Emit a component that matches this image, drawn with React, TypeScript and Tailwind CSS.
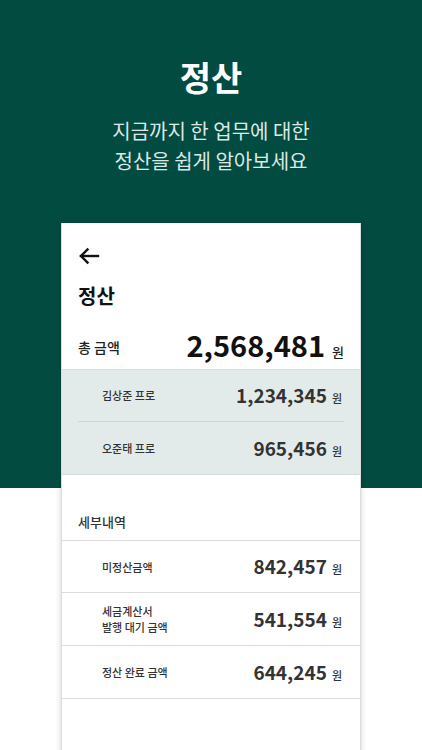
const font = { fontFamily: '"Noto Sans CJK KR", "Noto Sans", sans-serif' };

function ArrowLeft() {
  return (
    <svg width="22" height="18" viewBox="0 0 22 18" fill="none" stroke="#111" strokeWidth="2.4" strokeLinecap="square">
      <path d="M20 9H3" />
      <path d="M9.5 2.5L3 9l6.5 6.5" />
    </svg>
  );
}

function Amount({ value, big }: { value: string; big?: boolean }) {
  return (
    <div className={`flex items-baseline ${big ? "gap-[7px]" : "gap-[5px]"}`}>
      <span className={big ? "text-[29px] font-bold text-[#111]" : "text-[19px] font-bold text-[#333]"}>
        {value}
      </span>
      <span className={big ? "text-[13px] font-medium text-[#222]" : "text-[11px] font-medium text-[#333]"}>원</span>
    </div>
  );
}

const people = [
  { name: "김상준 프로", amount: "1,234,345" },
  { name: "오준태 프로", amount: "965,456" },
];

const details = [
  { label: ["미정산금액"], amount: "842,457", h: "h-[52px]" },
  { label: ["세금계산서", "발행 대기 금액"], amount: "541,554", h: "h-[53px]" },
  { label: ["정산 완료 금액"], amount: "644,245", h: "h-[53px]" },
];

export default function App() {
  return (
    <div
      style={font}
      className="h-[750px] overflow-hidden bg-[linear-gradient(to_bottom,#024b40_488px,#ffffff_488px)]"
    >
      <header className="flex flex-col items-center pt-[52px] text-center">
        <h1 className="text-[34px] font-bold leading-[50px] text-white">정산</h1>
        <p className="mt-[14px] text-[20px] leading-[30px] text-[#dce8e4]">
          지금까지 한 업무에 대한
          <br />
          정산을 쉽게 알아보세요
        </p>
      </header>

      <section className="mx-auto mt-[47px] h-[600px] w-[300px] border-x border-[#dcdcdc] bg-white shadow-[0_0_6px_rgba(0,0,0,0.18)]">
        <div className="px-[16px] pt-[24px]">
          <ArrowLeft />
          <h2 className="mt-[17px] text-[20px] font-bold leading-[28px] text-[#111]">정산</h2>
          <div className="mt-[11px] flex h-[48px] items-center justify-between">
            <span className="pt-[4px] text-[14px] font-medium text-[#222]">총 금액</span>
            <Amount value="2,568,481" big />
          </div>
        </div>

        <div className="border-y border-[#d6dedd] bg-[#e3ebea] px-[16px]">
          {people.map((p, i) => (
            <div
              key={p.name}
              className={`flex h-[52px] items-center justify-between pl-[24px] pr-[2px] ${i === 0 ? "border-b border-[#cdd6d4]" : ""}`}
            >
              <span className="text-[11px] font-medium text-[#333]">{p.name}</span>
              <Amount value={p.amount} />
            </div>
          ))}
        </div>

        <div className="px-[16px] pt-[37px] pb-[9px]">
          <h3 className="text-[13px] font-medium leading-[19px] text-[#333]">세부내역</h3>
        </div>

        <div className="border-t border-[#dcdcdc]">
          {details.map((d) => (
            <div
              key={d.amount}
              className={`flex ${d.h} items-center justify-between border-b border-[#dcdcdc] pl-[40px] pr-[18px]`}
            >
              <span className="text-[11px] font-medium leading-[16px] text-[#333]">
                {d.label.map((l) => (
                  <span key={l} className="block">{l}</span>
                ))}
              </span>
              <Amount value={d.amount} />
            </div>
          ))}
        </div>
      </section>
    </div>
  );
}
